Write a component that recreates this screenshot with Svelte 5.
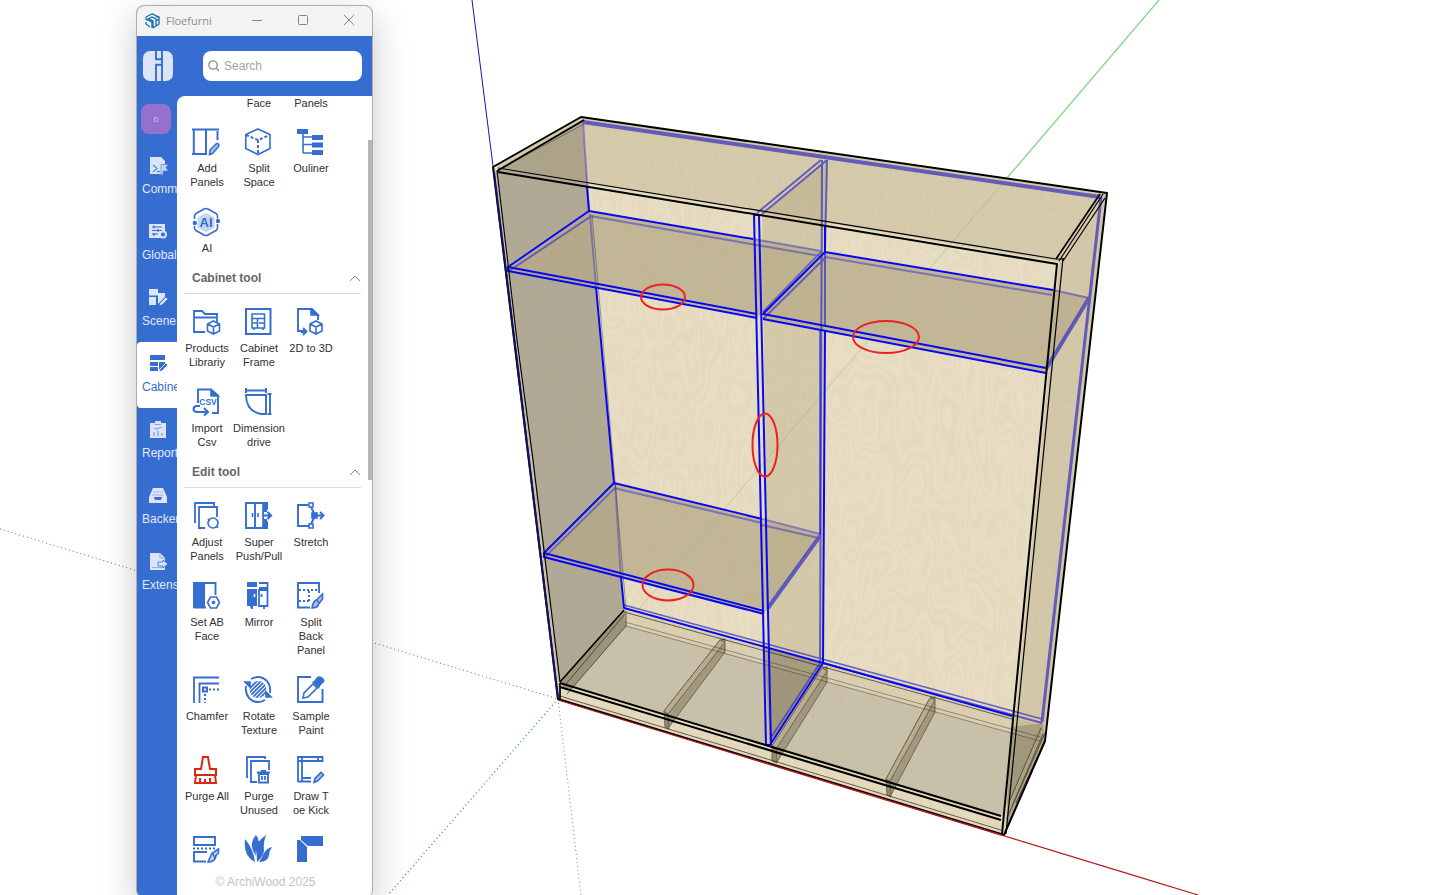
<script>
  const cube = (x, y) =>
    `<path d="M${x} ${y}l6 3v7l-6 3-6-3v-7zM${x - 6} ${y + 3}l6 3 6-3M${x} ${y + 6}v7"/>`;

  const icons = {
    add: '<path d="M0 1.500h27M0 26h15" stroke-width="2"/><path d="M1.800 1v25.500M14 2v24M25.500 3v9" stroke-width="2"/><path d="M17.500 26.500l.5-4.500 6-6q1.500-1 2.500 0t0 2.500l-6 7z" fill="#a9c2ee"/>',
    space: '<path d="M14 1l12 5.500v14L14 26.500 1.800 20.500v-14z"/><path d="M2 7l12 5 12-5M14 12v15" stroke-width="2" stroke-dasharray="3 2"/>',
    outline: '<path d="M7 5v20M7 9h10M7 16.500h10M7 25h10"/><path d="M1 1h11v5H1zM16 7h11v5H16zM16 14.500h11v5H16zM16 22h11v5H16z" fill="#366dd1" stroke="none"/>',
    ai: '<path d="M14 5l8.500 4.500v10L14 24l-8.500-4.500v-10z" fill="#c5d5f2" stroke="none"/><path d="M2.500 11V8q0-1.500 1.500-2.500l8-4.500q2-1 4 0l8 4.500q1.500 1 1.500 2.500v2.500M2.500 18v2q0 1.500 1.500 2.500l8 4.500q2 1 4 0l8-4.500q1.500-1 1.500-2.500v-4"/><circle cx="2.800" cy="15" r="2.200" fill="#366dd1" stroke="none"/><circle cx="26" cy="13" r="2.200" fill="#366dd1" stroke="none"/><text x="14" y="18.500" text-anchor="middle" font-family="Liberation Sans" font-weight="700" font-size="13" fill="#366dd1" stroke="none">AI</text>',
    products: '<path d="M13 24H2V3h8l3 3h12v8M2 9.500h22" stroke-width="1.800"/>' + cube(21.500, 13),
    frame: '<path d="M2 1h24.500v25H2z" stroke-width="2"/><path d="M8 6h12.500v14H8zM8 10.500h12M13.500 11v9M9 15h4M15 15h5M10 20v2M19 20v2"/>',
    convert: '<path d="M8 23H2V1h14l6 6v5M5 24h5M7 20l3.500 3.500L7 27" stroke-width="1.900"/><path d="M15 1l7 6h-7z" fill="#366dd1"/>' + cube(20, 13),
    csv: '<path d="M6 15V1.500h13l7 6V25h-6" stroke-width="1.900"/><path d="M19 2v6h7z" fill="#366dd1"/><path d="M8 18H4.500Q1.500 18.500 1.500 21T4.500 24H16M12 20l4 4-4 3.500" stroke-width="2"/><text x="16" y="16.500" text-anchor="middle" font-family="Liberation Sans" font-weight="700" font-size="8.500" fill="#366dd1" stroke="none">CSV</text>',
    dimension: '<path d="M2 2.500h20M2 0v5M22 0v5M26 6v20M23.500 6h4M23.500 26h4" stroke-width="1.900"/><path d="M2 7h20v19h-5Q2 23 2 7z" stroke-width="1.900"/>',
    adjust: '<path d="M4 20H3V1h19v3M13 26H7V5h18v10" stroke-width="1.800"/><circle cx="21" cy="21" r="5"/><path d="M24 24l2 2M16 17l2 2"/>',
    push: '<path d="M2 1h21v25H2zM11 1v25" stroke-width="1.900"/><path d="M8.500 11v4M14 11v4"/><path d="M19 1h4v25h-4z" fill="#366dd1"/><path d="M20 10h3v-3l4.500 6.500L23 20v-3h-3z" fill="#fff" stroke="none"/><path d="M20 13.500h7M23.500 10l3.500 3.500-3.500 3.500" stroke-width="2.200"/>',
    stretch: '<path d="M12 3H2v21h11M15 5l3 6M15 22l3-6" stroke-width="1.900"/><path d="M13 1h4v4h-4zM13 22h4v4h-4z"/><path d="M16 11h5v5h-5z" fill="#366dd1"/><path d="M19 13.500h8M24 10l3.500 3.500L24 17" stroke-width="1.900"/>',
    face: '<path d="M1 0h12v26H1z" fill="#366dd1" stroke="none"/><path d="M12 1h11.500v12M2 25.500h12" stroke-width="1.900"/><path d="M18.500 15h6l3 5.500-3 5.500h-6l-3-5.500z"/><circle cx="21.500" cy="20.500" r="1.800" fill="#366dd1" stroke="none"/>',
    mirror: '<path d="M3 0h10v5H3zM3 7h10v17H3zM6 24h3v3H7z" fill="#366dd1" stroke="none"/><path d="M15 1h8.500v5H15M15 8h8.500v16H15zM20 24v3M17.500 12v3" stroke-width="1.800"/><path d="M10.500 12v3" stroke="#fff"/>',
    back: '<path d="M14 25.500H2V1h21v10" stroke-width="1.900"/><path d="M3 8h20M3 19h12M13 9v10" stroke-width="2" stroke-dasharray="2 2"/><path d="M26.500 12l-6 6 3 3 3-4zM20 18q-3 2-4 8 6 0 7-5" fill="#a9c2ee"/>',
    chamfer: '<path d="M2 27V1.500h25M7.500 27V7.500H27" stroke-width="1.800"/><path d="M11 11.500h4v4h-4z" stroke-width="2"/><path d="M17 13.500h10M13 18v9" stroke-width="2" stroke-dasharray="2 2"/>',
    rotate: '<defs><clipPath id="disc"><circle cx="14" cy="13.500" r="8.500"/></clipPath></defs><path d="M7 3q9-5 16 2 4 5 3 12M21 24q-9 5-16-2-4-5-3-12" stroke-width="1.900"/><path d="M1 6h5v5zM27 21h-5v-5z" fill="#366dd1"/><g clip-path="url(#disc)"><path d="M0 14L14 0M0 18L18 0M0 22L22 0M3 23L23 3M4 26L26 4M8 26L26 8M12 26l14-14" stroke-width="1.800"/></g>',
    sample: '<path d="M15 1H2v25h24.500V13" stroke-width="1.900"/><path d="M7 22l1-5 9-9 4 4-9 9z"/><path d="M16 6l2-1 3-4q3-2 6 1t0 5l-3 3-1 3z" fill="#366dd1" stroke="none"/>',
    purge: '<g stroke="#dd2712" stroke-width="2"><path d="M11 1h5l2 12h6v6H3v-6h6zM4 19L3 27h21l-1-8M8 27v-5M13 27v-4M18 27v-5"/></g>',
    unused: '<path d="M4 21H3V1h18v2M13 26H7V5h18v9" stroke-width="1.800"/><path d="M13 16.500h13M17 15h5" stroke-width="2"/><path d="M15 18h9v8.500h-9zM18 20v4M21 20v4" stroke-width="1.800"/>',
    kick: '<path d="M2 26V1h24.500v4H2M6 1v25M2 25.500h13M7 22h8M22 1v4" stroke-width="1.800"/><path d="M18 26.500l1-4 6-6 2.500 2.500-6 6z" fill="#a9c2ee"/>',
    cut: '<path d="M2 1h21v8H2zM14 25.500H2V16h13" stroke-width="1.900"/><path d="M1 12.500h23" stroke-width="2" stroke-dasharray="2 2"/><path d="M26.500 13l-6 4 2 4 4-4zM20 17l-4 9q7 0 8-6" fill="#c5d5f2"/>',
    flame: '<path d="M1 3Q-1 20 11 26Q10 14 1 3zM12 -1q-5 6-4 12 1 5 4 9-1-5 1-9 4-6-1-12zM22 -1Q11 7 12 14q1 7 1 12 7-6 7-12-1-7 2-15zM28 11q-5 1-8 6-2 5-5 9 9 0 10-7 0-4 3-8z" fill="#366dd1" stroke="none"/>',
    corner: '<path d="M5 0h22v10H12L5 4zM1 4h3l7 7v15H1z" fill="#366dd1" stroke="none"/>'
  };

  const sections = [
    {
      title: '',
      tools: [
        ['Add|Panels', 'add'],
        ['Split|Space', 'space'],
        ['Ouliner', 'outline'],
        ['AI', 'ai']
      ]
    },
    {
      title: 'Cabinet tool',
      tools: [
        ['Products|Librariy', 'products'],
        ['Cabinet|Frame', 'frame'],
        ['2D to 3D', 'convert'],
        ['Import|Csv', 'csv'],
        ['Dimension|drive', 'dimension']
      ]
    },
    {
      title: 'Edit tool',
      tools: [
        ['Adjust|Panels', 'adjust'],
        ['Super|Push/Pull', 'push'],
        ['Stretch', 'stretch'],
        ['Set AB|Face', 'face'],
        ['Mirror', 'mirror'],
        ['Split|Back|Panel', 'back'],
        ['Chamfer', 'chamfer'],
        ['Rotate|Texture', 'rotate'],
        ['Sample|Paint', 'sample'],
        ['Purge All', 'purge'],
        ['Purge|Unused', 'unused'],
        ['Draw T|oe Kick', 'kick'],
        ['', 'cut'],
        ['', 'flame'],
        ['', 'corner']
      ]
    }
  ].map((s) => ({
    title: s.title,
    tools: s.tools.map(([label, icon]) => ({ icon, lines: label ? label.split('|') : [] }))
  }));

  const nav = [
    { label: 'Comm', icon: '<path d="M1 0h11l4 4v4l-3 1-1 8H1z" fill="#dbe5f7"/><path d="M4 8l4 3.500L4 15M8 14.500h3" fill="none" stroke="#5b8be0" stroke-width="1.300"/><path d="M12 7.500h7l-2 3 2 3.500h-5v4h-2z" fill="#c3d5f4" stroke="#5b8be0" stroke-width=".7"/>' },
    { label: 'Global', icon: '<path d="M0 1h16v8l-5 6H0z" fill="#dbe5f7"/><path d="M3 4h10M3 7.500h10M3 11h6M5 2.500v3M9 6v3M5 10v3" stroke="#366dd1" stroke-width="1.200"/><circle cx="14" cy="11.500" r="3" fill="#366dd1" stroke="#dbe5f7" stroke-width="2"/>' },
    { label: 'Scene', icon: '<path d="M0 0h9v6H0zM0 8h7v8H0zM9 4h7v4l-7 7z" fill="#dbe5f7"/><path d="M0 6h9v1H0z" fill="#62b6ef"/><path d="M10 17l1-3 6-6 2 2-6 6z" fill="#dbe5f7" stroke="#366dd1" stroke-width=".7"/>' },
    { label: 'Cabine', icon: '<path d="M1 0h15v5H1zM1 7h8v4H1zM1 12h8v4H1zM10 7h6v2l-6 6z" fill="#366dd1"/><path d="M10 17l1-3 6-6 2 2-6 6z" fill="#366dd1" stroke="#fff" stroke-width=".8"/>', active: true },
    { label: 'Report', icon: '<path d="M1 2h5V0h6v2h5v15H1z" fill="#dbe5f7"/><path d="M6 3.500h6M5 7l3 1 2-1 3-1M5 11v4M9 10v5M13 12v3" stroke="#7ba0e4" stroke-width="1.200" fill="none"/>' },
    { label: 'Backer', icon: '<path d="M4 1h10l4 9v6H0v-6z" fill="#dbe5f7"/><path d="M4 5h10M3 8h12" stroke="#9bb8eb" fill="none"/><path d="M5 10h8l-1 3H6z" fill="#366dd1"/>' },
    { label: 'Extens', icon: '<path d="M1 0h10l5 5v12H1z" fill="#dbe5f7"/><path d="M11 0v5h5" stroke="#8eafe8" fill="none"/><path d="M3 14.500h11" stroke="#8eafe8"/><path d="M9 9h5V7l5 4-5 4v-2H9z" fill="#dbe5f7" stroke="#366dd1" stroke-width=".8"/>' }
  ];
</script>

<main>
  <svg class="scene" viewBox="0 0 1451 895" preserveAspectRatio="xMinYMin slice" role="img" aria-label="Wardrobe model">
    <defs>
      <clipPath id="body"><path d="M493 166L581 117 1107 193 1045 741 1004 835 558 699z" /></clipPath>
      <filter id="grain" x="0" y="0" width="100%" height="100%">
        <feTurbulence type="fractalNoise" baseFrequency=".03 .011" numOctaves="2" seed="8" />
        <feColorMatrix values="0 0 0 0 .58  0 0 0 0 .42  0 0 0 0 .25  1 0 0 0 0" />
        <feComponentTransfer>
          <feFuncA type="table" tableValues="0 0 .3 0 .25 .05 .3 0 .3 .05 .25 0 .3 .05 .3 0 .25 .05 .3 0 .3 0 0" />
        </feComponentTransfer>
      </filter>
    </defs>

    <g fill="none">
      <path d="M472 0L493 166" stroke="#1414b4" />
      <path d="M1159 0L1007 178" stroke="#7ed87e" stroke-width="1.200" />
      <path d="M0 529L558 699" stroke="#c03c3c" stroke-dasharray="1 3" />
      <path d="M558 699L388 895" stroke="#22a322" stroke-width="1.300" stroke-dasharray="1 3" />
      <path d="M558 699L581 895" stroke="#7777d8" stroke-dasharray="1 3" />
    </g>

    <!-- carcass faces -->
    <path d="M493 166L581 117 1107 193 1045 741 1004 835 558 699z" fill="#e8dfc5" />
    <path d="M497 171L582 121 624 608 560 682z" fill="#afa996" />
    <path d="M493 166L497 171 561 684 561 699 558 699z" fill="#cfc5aa" />
    <path d="M562 682L624 610 1042 726 1002 816z" fill="#c9c2ab" />
    <path d="M624 610L1042 726 1040 741 626 626z" fill="#dbd1b4" />
    <path d="M561 682L624 610 626 626 566 695z" fill="#999179" />
    <path d="M560 686L1001 820 1002 834 559 699z" fill="#e6dcc0" />
    <path d="M1159 0L640 608" stroke="#8cc878" opacity=".5" clip-path="url(#body)" />

    <!-- plinth crossbars -->
    <g stroke="#6a644f" stroke-width="1">
      <path d="M664 711L720 640 725 639 725 652 669 727z" fill="#a0987f" />
      <path d="M664 711L668 714 669 729 665 727z" fill="#8f876f" />
      <path d="M664 711L668 714 725 642 720 640z" fill="#b8ae92" />
      <path d="M772 746L822 668 827 667 827 682 777 762z" fill="#a0987f" />
      <path d="M772 746L776 749 777 763 772 761z" fill="#8f876f" />
      <path d="M772 746L776 749 827 671 822 668z" fill="#b8ae92" />
      <path d="M886 779L930 698 935 697 935 712 891 795z" fill="#a0987f" />
      <path d="M886 779L890 781 891 797 887 795z" fill="#8f876f" />
      <path d="M886 779L890 781 935 700 930 698z" fill="#b8ae92" />
    </g>

    <!-- translucent panels -->
    <path d="M493 166L581 117 1107 193 1059 262z" fill="#a09369" opacity=".25" />
    <path d="M762 215L826 160 823 663 770 745z" fill="#9a8f5f" opacity=".26" />
    <path d="M764 647L823 663 770 745z" fill="#7d755d" opacity=".5" />
    <path d="M1059 262L1107 193 1045 741 1004 835z" fill="#988d5e" opacity=".26" />
    <path d="M1011 727L1043 723 1045 741 1006 830z" fill="#7d755d" opacity=".45" />
    <path d="M508 267L589 211 821 251 757 318 508 271z" fill="#b5aa88" opacity=".75" />
    <path d="M763 314L825 252 1089 297 1046 373 763 319z" fill="#b5aa88" opacity=".75" />
    <path d="M544 553L614 483 820 535 764 614 544 557z" fill="#b5aa88" opacity=".75" />
    <rect x="490" y="110" width="620" height="730" filter="url(#grain)" clip-path="url(#body)" opacity=".38" />

    <!-- hidden edges -->
    <g fill="none" stroke="#4640be" stroke-width="2" opacity=".8">
      <path d="M583 122L1100 197" stroke-width="4" />
      <path d="M583 122L589 211M590 214L596 287M615 484L621 577" opacity=".65" />
      <path d="M757 213L821 160M762 214L827 160M822 160L820 663M827 160L825 250M825 250L825 325" />
      <path d="M590 216L820 256M753 239L821 251M825 257L1052 295M1053 290L1089 298" opacity=".7" />
      <path d="M509 271L590 217M763 312L821 252M763 319L826 257" opacity=".9" />
      <path d="M1101 197L1042 722" stroke-width="3" />
      <path d="M1046 369L1089 298M768 608L820 536" stroke-width="4" />
      <path d="M614 488L762 523M762 519L820 534M762 525L819 538M546 556L614 489" opacity=".7" />
      <path d="M624 605L1042 719" stroke-width="1.500" />
      <path d="M823 663L1042 723M770 739L820 663" />
    </g>
    <g fill="none" stroke="#2f2b20" stroke-width="1" opacity=".7">
      <path d="M584 124L500 169M592 215L626 608M626 626L1040 741M625 622L1040 737" opacity=".6" />
      <path d="M624 612L1012 719M626 611V626M567 694L626 626M560 696L1001 830M566 684L625 614" />
      <path d="M1009 802L1041 728M1012 806L1043 734M1007 818L1045 733M1016 803L1045 741" />
    </g>

    <!-- selected panels -->
    <g fill="none" stroke="#0808ee" stroke-width="2" stroke-linejoin="round">
      <path d="M587 187L589 211 753 239M589 211L508 267 757 314M508 267v4L757 318" />
      <path d="M596 287L614 483M621 577L624 608 823 663 1012 716" />
      <path d="M825 226V252L1053 290M825 252L763 314 1046 368M763 319L1046 373" />
      <path d="M754 215L758 390 766 745M759 215L763 390 771 745M754 215h5" />
      <path d="M825 331L823 663 770 745h-4" />
      <path d="M820 331L820 535" stroke-width="1" />
      <path d="M614 483L762 519M614 483L544 553 764 611M544 553v4L764 614" />
    </g>

    <!-- outer edges -->
    <g fill="none" stroke="#000" stroke-width="2" stroke-linejoin="round">
      <path d="M498 172L1057 264 1045 387 1002 834M493 167L581 117 1107 193 1045 741 1004 835 558 699z" />
      <path d="M497 171L584 120M560 683L1001 816M560 687L1001 820" />
      <path d="M560 682L624 610M560 683v16M1056 259L1100 194" stroke-width="1.700" />
      <path d="M498 168L1056 259M497 171L517 340 533 460 560 682M1063 258L1050 387 1006 834M1059 261L1103 194M1063 261L1105 198M1056 259h8" stroke-width="1.200" />
      <path d="M494 172L558 699" stroke="#10106b" />
    </g>
    <path d="M558 700L1198 895" stroke="#b51c1c" stroke-width="1.300" />
    <g fill="none" stroke="#ee2020" stroke-width="2">
      <ellipse cx="663" cy="297" rx="22" ry="12.500" />
      <ellipse cx="886" cy="337" rx="33" ry="16" />
      <ellipse cx="765" cy="445" rx="12.500" ry="31.500" />
      <ellipse cx="668" cy="585" rx="25.500" ry="15.500" />
    </g>
  </svg>

  <section class="window" aria-label="Floefurni">
    <header class="titlebar">
      <svg class="app-icon" viewBox="0 0 15 16" fill="none" stroke="#1671ac" stroke-width="1.300">
        <path d="M1 4l6-3 7 3v7l-6 4M1 7l6-3 4 2v7M1 4v2l6 3v6M1 9v2l4 3M4 6l4 2v7M8 1l6 4M11 8l3-2" />
      </svg>
      <h1>Floefurni</h1>
      <button aria-label="Minimize"><svg viewBox="0 0 12 12"><path d="M1 5.500h10" /></svg></button>
      <button aria-label="Maximize"><svg viewBox="0 0 12 12"><rect x="1.500" y=".5" width="9" height="9" rx="1" /></svg></button>
      <button aria-label="Close"><svg viewBox="0 0 12 12"><path d="M1 0l10 10M11 0L1 10" /></svg></button>
    </header>

    <div class="topbar">
      <svg class="logo" viewBox="0 0 30 30">
        <rect width="30" height="30" rx="7" fill="#dbe5f7" />
        <path d="M13 0v8.300h5.500M19 0v30M13 30V13.700h5.500" fill="none" stroke="#366dd1" stroke-width="1.900" />
      </svg>
      <label class="search">
        <svg viewBox="0 0 11 13"><circle cx="5" cy="5" r="4.200" /><path d="M8 8l3 3" /></svg>
        <input type="search" placeholder="Search" aria-label="Search" />
      </label>
    </div>

    <div class="content">
      <nav>
        <button class="avatar">D</button>
        {#each nav as item}
          <button class="nav-item" class:active={item.active}>
            <svg viewBox="0 0 19 18">{@html item.icon}</svg>
            <span>{item.label}</span>
          </button>
        {/each}
      </nav>

      <div class="panel">
        <div class="scroll">
          <div class="grid">
            <span></span><span>Face</span><span>Panels</span>
          </div>
          {#each sections as section}
            {#if section.title}
              <h2>
                {section.title}
                <svg viewBox="0 0 12 7"><path d="M1 6l5-5 5 5" /></svg>
              </h2>
            {/if}
            <div class="grid" class:follow={!section.title}>
              {#each section.tools as tool}
                <button class="tool" aria-label={tool.lines.length ? null : tool.icon}>
                  <svg viewBox="1 0 28 28">{@html icons[tool.icon]}</svg>
                  {#each tool.lines as line}<span>{line}</span>{/each}
                </button>
              {/each}
            </div>
          {/each}
        </div>
        <div class="thumb"></div>
        <footer>© ArchiWood 2025</footer>
      </div>
    </div>
  </section>
</main>

<style>
  :global(body) {
    margin: 0;
    background: #fff;
  }
  main {
    position: relative;
    height: 100vh;
    overflow: hidden;
    font-family: 'Liberation Sans', Arial, sans-serif;
  }
  button {
    border: 0;
    padding: 0;
    background: none;
    font: inherit;
    color: inherit;
  }
  .scene {
    display: block;
    width: 100%;
    height: 100%;
  }
  .window {
    position: absolute;
    top: 5px;
    left: 136px;
    bottom: -3px;
    width: 235px;
    display: flex;
    flex-direction: column;
    overflow: hidden;
    border: 1px solid #adadad;
    border-radius: 8px;
    background: #366dd1;
    box-shadow: 0 12px 36px rgba(0, 0, 0, 0.22);
  }
  .titlebar {
    display: flex;
    align-items: center;
    height: 30px;
    flex: none;
    background: #f3f3f3;
    color: #8b8b8b;
  }
  .app-icon {
    width: 15px;
    height: 16px;
    margin-left: 8px;
  }
  h1 {
    flex: 1;
    margin: 0 0 0 6px;
    font: 11px/14px 'Open Sans', sans-serif;
  }
  .titlebar button {
    display: grid;
    place-items: center;
    width: 46px;
    height: 30px;
  }
  .titlebar button:first-of-type {
    margin-left: -8px;
  }
  .titlebar button svg {
    width: 12px;
    height: 12px;
    fill: none;
    stroke: #858585;
  }
  .topbar {
    display: flex;
    align-items: center;
    gap: 30px;
    height: 60px;
    flex: none;
    padding: 0 10px 0 6px;
  }
  .logo {
    width: 30px;
    height: 30px;
    flex: none;
  }
  .search {
    flex: 1;
    min-width: 0;
    display: flex;
    align-items: center;
    gap: 5px;
    height: 30px;
    padding: 0 5px;
    border-radius: 8px;
    background: #fff;
  }
  .search svg {
    width: 11px;
    height: 13px;
    flex: none;
    fill: none;
    stroke: #8f8f8f;
    stroke-width: 1.3;
  }
  input {
    width: 100%;
    min-width: 0;
    border: 0;
    padding: 0;
    outline: 0;
    background: none;
    font: 12px 'Liberation Sans', Arial, sans-serif;
  }
  input::placeholder {
    color: #a3a3a3;
  }
  .content {
    flex: 1;
    min-height: 0;
    display: flex;
  }
  nav {
    width: 40px;
    flex: none;
    display: flex;
    flex-direction: column;
    overflow: hidden;
    color: #e1e9f8;
    font-size: 12px;
  }
  .avatar {
    flex: none;
    width: 30px;
    height: 30px;
    margin: 8px 0 10px 4px;
    border-radius: 8px;
    background: #9670cf;
    color: #d8c8ee;
    font-size: 7px;
  }
  .nav-item {
    flex: none;
    display: flex;
    flex-direction: column;
    gap: 7px;
    width: 40px;
    height: 66px;
    padding: 13px 0 0 5px;
    white-space: nowrap;
    text-align: left;
    line-height: 14px;
    border-radius: 4px 0 0 4px;
  }
  .nav-item svg {
    width: 19px;
    height: 18px;
    margin-left: 7px;
  }
  .nav-item.active {
    background: #fff;
    color: #366dd1;
  }
  .panel {
    position: relative;
    flex: 1;
    min-width: 0;
    display: flex;
    flex-direction: column;
    overflow: hidden;
    border-top-left-radius: 8px;
    background: #fff;
  }
  .scroll {
    flex: 1;
    min-height: 0;
    overflow: hidden;
    padding: 0 11px 0 4px;
  }
  .grid {
    display: grid;
    grid-template-columns: repeat(3, 52px);
    row-gap: 19px;
    font-size: 11px;
    line-height: 14px;
    color: #303133;
    text-align: center;
  }
  .follow {
    margin-top: 18px;
  }
  .tool {
    display: flex;
    flex-direction: column;
    align-items: center;
    white-space: nowrap;
  }
  .tool svg {
    width: 28px;
    height: 28px;
    margin-bottom: 5px;
    overflow: visible;
    fill: none;
    stroke: #366dd1;
    stroke-width: 1.6;
  }
  h2 {
    display: flex;
    align-items: center;
    justify-content: space-between;
    margin: 14px 0 14px 3px;
    padding: 0 0 6px 8px;
    border-bottom: 1px solid #dcdcdc;
    font-size: 12px;
    line-height: 18px;
    color: #666;
  }
  h2 svg {
    width: 12px;
    height: 7px;
    fill: none;
    stroke: #888;
  }
  .thumb {
    position: absolute;
    top: 44px;
    right: 0;
    width: 4px;
    height: 340px;
    background: #b5b5b5;
  }
  footer {
    flex: none;
    height: 30px;
    padding-right: 18px;
    line-height: 30px;
    text-align: center;
    font-size: 12px;
    color: #c2c4c9;
    background: #fff;
  }
</style>
